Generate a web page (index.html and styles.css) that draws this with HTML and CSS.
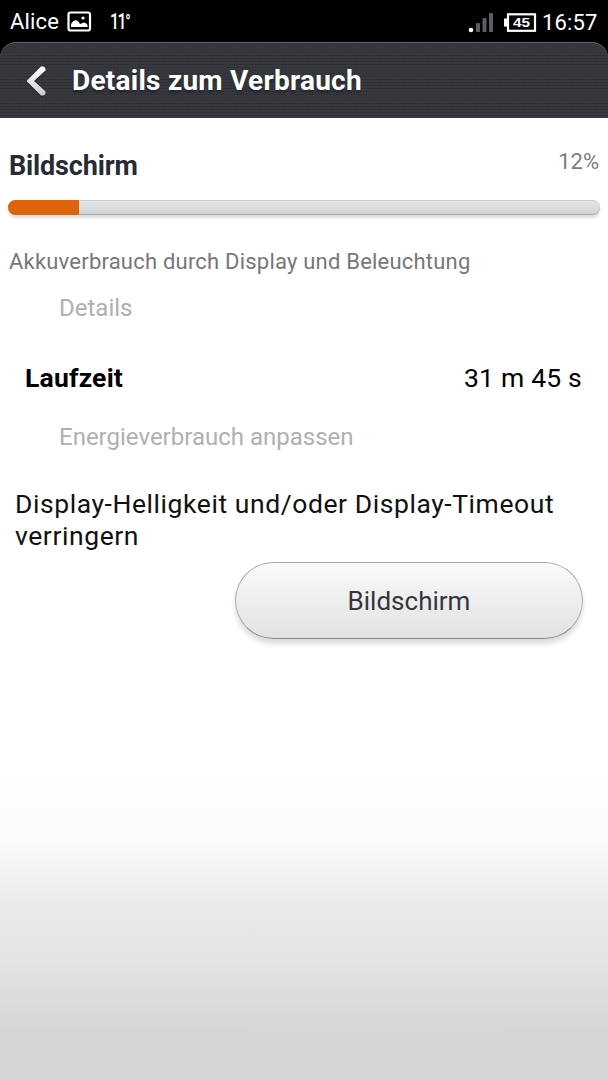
FILE: index.html
```html
<!DOCTYPE html>
<html lang="de">
<head>
<meta charset="utf-8">
<title>Details zum Verbrauch</title>
<link rel="stylesheet" href="styles.css">
</head>
<body>
<div class="statusbar">
  <span class="carrier">Alice</span>
  <svg class="picture" width="25" height="22" viewBox="0 0 25 22"><rect x="1.500" y="1.500" width="21.500" height="18" rx="2" fill="none" stroke="#fff" stroke-width="2.200"/><path d="M4 16V13Q7 8 10 9.500Q12 10.500 13 13L17 11.500Q20 12 20.500 14V16Z" fill="#fff"/><circle cx="16" cy="7" r="1.600" fill="#fff"/></svg>
  <span class="temp">11<span class="degree">°</span></span>
  <svg class="signal" width="26" height="22" viewBox="0 0 26 22"><circle cx="3" cy="18" r="2.300" fill="#fff"/><g fill="#5d5d65"><rect x="8" y="11" width="4" height="9" rx="1"/><rect x="14.500" y="6" width="4" height="14" rx="1"/><rect x="21" y="1" width="4" height="19" rx="1"/></g></svg>
  <svg class="battery" width="33" height="20" viewBox="0 0 33 20"><rect x="4" y="1.300" width="27" height="16.500" fill="none" stroke="#fff" stroke-width="2.200"/><rect x="0" y="5.500" width="3" height="8" fill="#fff"/><text x="9" y="14" class="level" textLength="17" lengthAdjust="spacingAndGlyphs">45</text></svg>
  <span class="clock">16:57</span>
</div>
<header class="header">
  <svg class="back" width="22" height="34" viewBox="0 0 22 34"><defs><linearGradient id="arrow" x1="0" y1="0" x2="0" y2="1"><stop offset="0" stop-color="#fff"/><stop offset="1" stop-color="#ccc"/></linearGradient></defs><path d="M17.500 5L4.500 17.500L17.500 30" transform="translate(0 2)" fill="none" stroke="#292a2f" stroke-width="5"/><path d="M17 2.500Q20 3 19.500 6.500L8 17L19.500 27.500Q20 31 17 31.500L15 31.500L1 17.500V16.500L15 2.500Z" fill="url(#arrow)"/></svg>
  <h1 class="title">Details zum Verbrauch</h1>
</header>
<main class="content">
  <div class="summary"><h2 class="name">Bildschirm</h2><span class="percent">12%</span></div>
  <div class="track"><div class="fill" style="width:12%"></div></div>
  <p class="description">Akkuverbrauch durch Display und Beleuchtung</p>
  <h3 class="section details">Details</h3>
  <div class="row"><span class="label">Laufzeit</span><span class="value">31 m 45 s</span></div>
  <h3 class="section adjust">Energieverbrauch anpassen</h3>
  <p class="hint">Display-Helligkeit und/oder Display-Timeout<br>verringern</p>
  <button class="button" type="button">Bildschirm</button>
</main>
</body>
</html>
```
FILE: styles.css
```css
* { box-sizing: border-box; }
body { margin: 0; width: 608px; height: 1080px; overflow: hidden; background: #000; font-family: Roboto, sans-serif; display: flex; flex-direction: column; }
h1, h2, h3, p { margin: 0; }
.statusbar { height: 42px; flex: none; display: flex; align-items: flex-start; padding: 9px 10px 0; color: #fff; font-size: 22px; line-height: 26px; white-space: nowrap; }
.carrier { width: 57px; letter-spacing: .15px; }
.picture { margin-top: 2px; }
.temp { margin-left: 18px; font-weight: 500; letter-spacing: -2px; transform: scaleX(.72); transform-origin: left; }
.degree { font-size: 20px; }
.signal { margin: 3px 0 0 auto; }
.battery { margin: 4px 0 0 10px; }
.level { font: bold 12px "Liberation Sans", sans-serif; fill: #fff; }
.clock { width: 56px; margin-left: 5px; letter-spacing: .15px; padding-top: 1px; }
.header { height: 76px; flex: none; display: flex; align-items: center; padding: 1px 0 0 26px; border-radius: 16px 16px 0 0; border-top: 1px solid #66676b; background: repeating-linear-gradient(90deg, #2b2c3240 0 1px, transparent 1px 3px), repeating-linear-gradient(#303136 0 1px, #393a40 1px 3px); }
.title { margin-left: 24px; color: #fff; font-size: 28px; font-weight: 700; letter-spacing: .25px; line-height: 36px; text-shadow: 0 3px 2px #282930; white-space: nowrap; }
.content { flex: 1; display: flex; flex-direction: column; background: linear-gradient(#fff 0 655px, #fafafa 725px, #e8e9ea 795px, #e3e4e6 842px, #d5d6d8 912px); }
.summary { height: 82px; padding: 30px 9px 0; display: flex; justify-content: space-between; }
.name { color: #292b33; font-size: 27px; line-height: 36px; font-weight: 700; letter-spacing: -.15px; }
.percent { color: #7c7c7c; font-size: 22px; line-height: 27px; }
.track { height: 15px; margin: 0 8px; border-radius: 8px; background: linear-gradient(#e6e7e8, #d0d1d3); box-shadow: inset 0 -1px #aaa, inset 0 1px #ccc, 0 3px 3px #ddd; overflow: hidden; }
.fill { height: 15px; background: #df6309; }
.description { margin: 32px 9px 0; color: #777; font-size: 22px; letter-spacing: .21px; line-height: 30px; white-space: nowrap; }
.section { margin-left: 59px; font-weight: 400; color: #b0b0b0; font-size: 24px; line-height: 30px; white-space: nowrap; }
.details { margin-top: 16px; }
.row { margin: 37px 26px 0 25px; height: 36px; display: flex; justify-content: space-between; font-size: 26.5px; letter-spacing: .2px; line-height: 36px; }
.label { font-weight: 700; }
.adjust { margin-top: 26px; }
.hint { margin: 36px 15px 0; font-size: 26.5px; letter-spacing: .57px; line-height: 32px; white-space: nowrap; color: #111; }
.button { align-self: flex-end; width: 348px; height: 77px; margin: 10px 25px 0 0; padding: 0; border: 1px solid #aaa; border-bottom-color: #888; border-radius: 39px; background: linear-gradient(#fafafa, #e2e2e4); box-shadow: inset 0 1px #fff, 0 5px 5px #ddd; color: #34353e; font: 26px Roboto, sans-serif; }
```
